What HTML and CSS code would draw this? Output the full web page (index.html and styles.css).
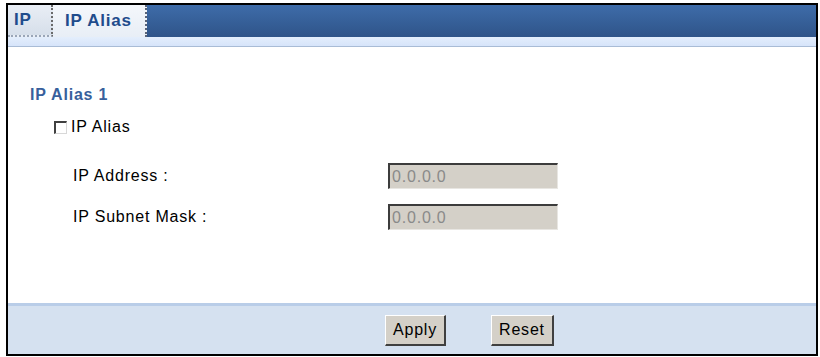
FILE: index.html
```html
<!DOCTYPE html>
<html>
<head>
<meta charset="utf-8">
<link rel="stylesheet" href="styles.css">
</head>
<body>
<div class="frame">
  <div class="tabs">
    <div class="tab tab-ip">IP</div>
    <div class="tab tab-active">IP Alias</div>
    <div class="tab-fill"></div>
  </div>
  <div class="band"></div>
  <div class="content">
    <h2 class="heading">IP Alias 1</h2>
    <label class="check-row"><span class="checkbox"></span><span class="check-label">IP Alias</span></label>
    <div class="field">
      <span class="field-label">IP Address :</span>
      <span class="input">0.0.0.0</span>
    </div>
    <div class="field">
      <span class="field-label">IP Subnet Mask :</span>
      <span class="input">0.0.0.0</span>
    </div>
  </div>
  <div class="footer">
    <button class="btn btn-apply">Apply</button>
    <button class="btn btn-reset">Reset</button>
  </div>
</div>
</body>
</html>
```
FILE: styles.css
```css
html, body {
  margin: 0;
  padding: 0;
  background: #fff;
}
body {
  font-family: "Liberation Sans", Arial, sans-serif;
  font-size: 16px;
  letter-spacing: 0.8px;
  color: #000;
}
.frame {
  margin: 3px 0 0 6px;
  width: 808px;
  height: 349px;
  border: 2px solid #000;
  display: flex;
  flex-direction: column;
  overflow: hidden;
}
.tabs {
  display: flex;
  height: 32px;
  flex: none;
}
.tab {
  font-size: 17px;
  font-weight: bold;
  color: #1f4c8c;
  display: flex;
  align-items: center;
  box-sizing: border-box;
}
.tab-ip {
  width: 45px;
  padding-left: 6px;
  background: linear-gradient(#e9eef5, #d6dfea);
  border-right: 2px dotted #6a6a6a;
  border-bottom: 2px dotted #9aa6b8;
}
.tab-active {
  width: 94px;
  padding-left: 12px;
  background: linear-gradient(#f4f7fb, #e8eef6);
  border-right: 2px dotted #5a6478;
}
.tab-fill {
  flex: 1;
  background: linear-gradient(#3e6ca9, #2f5489);
}
.band {
  height: 9px;
  flex: none;
  background: linear-gradient(#e4eefc, #d6e4fa);
  border-bottom: 1px solid #a9bcd6;
}
.content {
  flex: 1;
  padding: 38px 0 0 22px;
}
.heading {
  margin: 0;
  font-size: 16px;
  line-height: 20px;
  font-weight: bold;
  color: #37609c;
}
.check-row {
  display: flex;
  align-items: center;
  margin: 12px 0 0 24px;
  height: 20px;
}
.checkbox {
  box-sizing: border-box;
  width: 13px;
  height: 13px;
  border-top: 2px solid #404040;
  border-left: 2px solid #404040;
  border-right: 1px solid #d8d8d8;
  border-bottom: 1px solid #d8d8d8;
  background: #fff;
  margin-right: 4px;
}
.check-label {
  line-height: 20px;
}
.field {
  display: flex;
  align-items: center;
  margin: 26px 0 0 43px;
  height: 26px;
}
.field + .field {
  margin-top: 15px;
}
.field-label {
  width: 315px;
}
.input {
  box-sizing: border-box;
  width: 170px;
  height: 26px;
  background: #d4d0c8;
  border-top: 2px solid #3c3c3c;
  border-left: 2px solid #3c3c3c;
  border-right: 1px solid #e8e6e2;
  border-bottom: 1px solid #e8e6e2;
  color: #8a8a8a;
  padding-left: 2px;
  line-height: 23px;
}
.footer {
  flex: none;
  height: 48px;
  border-top: 3px solid #b9cde8;
  background: #d5e1f0;
  display: flex;
  align-items: center;
  padding-left: 377px;
  gap: 45px;
}
.btn {
  font-family: "Liberation Sans", Arial, sans-serif;
  font-size: 16px;
  letter-spacing: 0.8px;
  height: 31px;
  background: #d4d0c8;
  border-top: 1px solid #ffffff;
  border-left: 1px solid #ffffff;
  border-right: 2px solid #404040;
  border-bottom: 2px solid #404040;
  padding: 0 7px;
  color: #000;
}
```
